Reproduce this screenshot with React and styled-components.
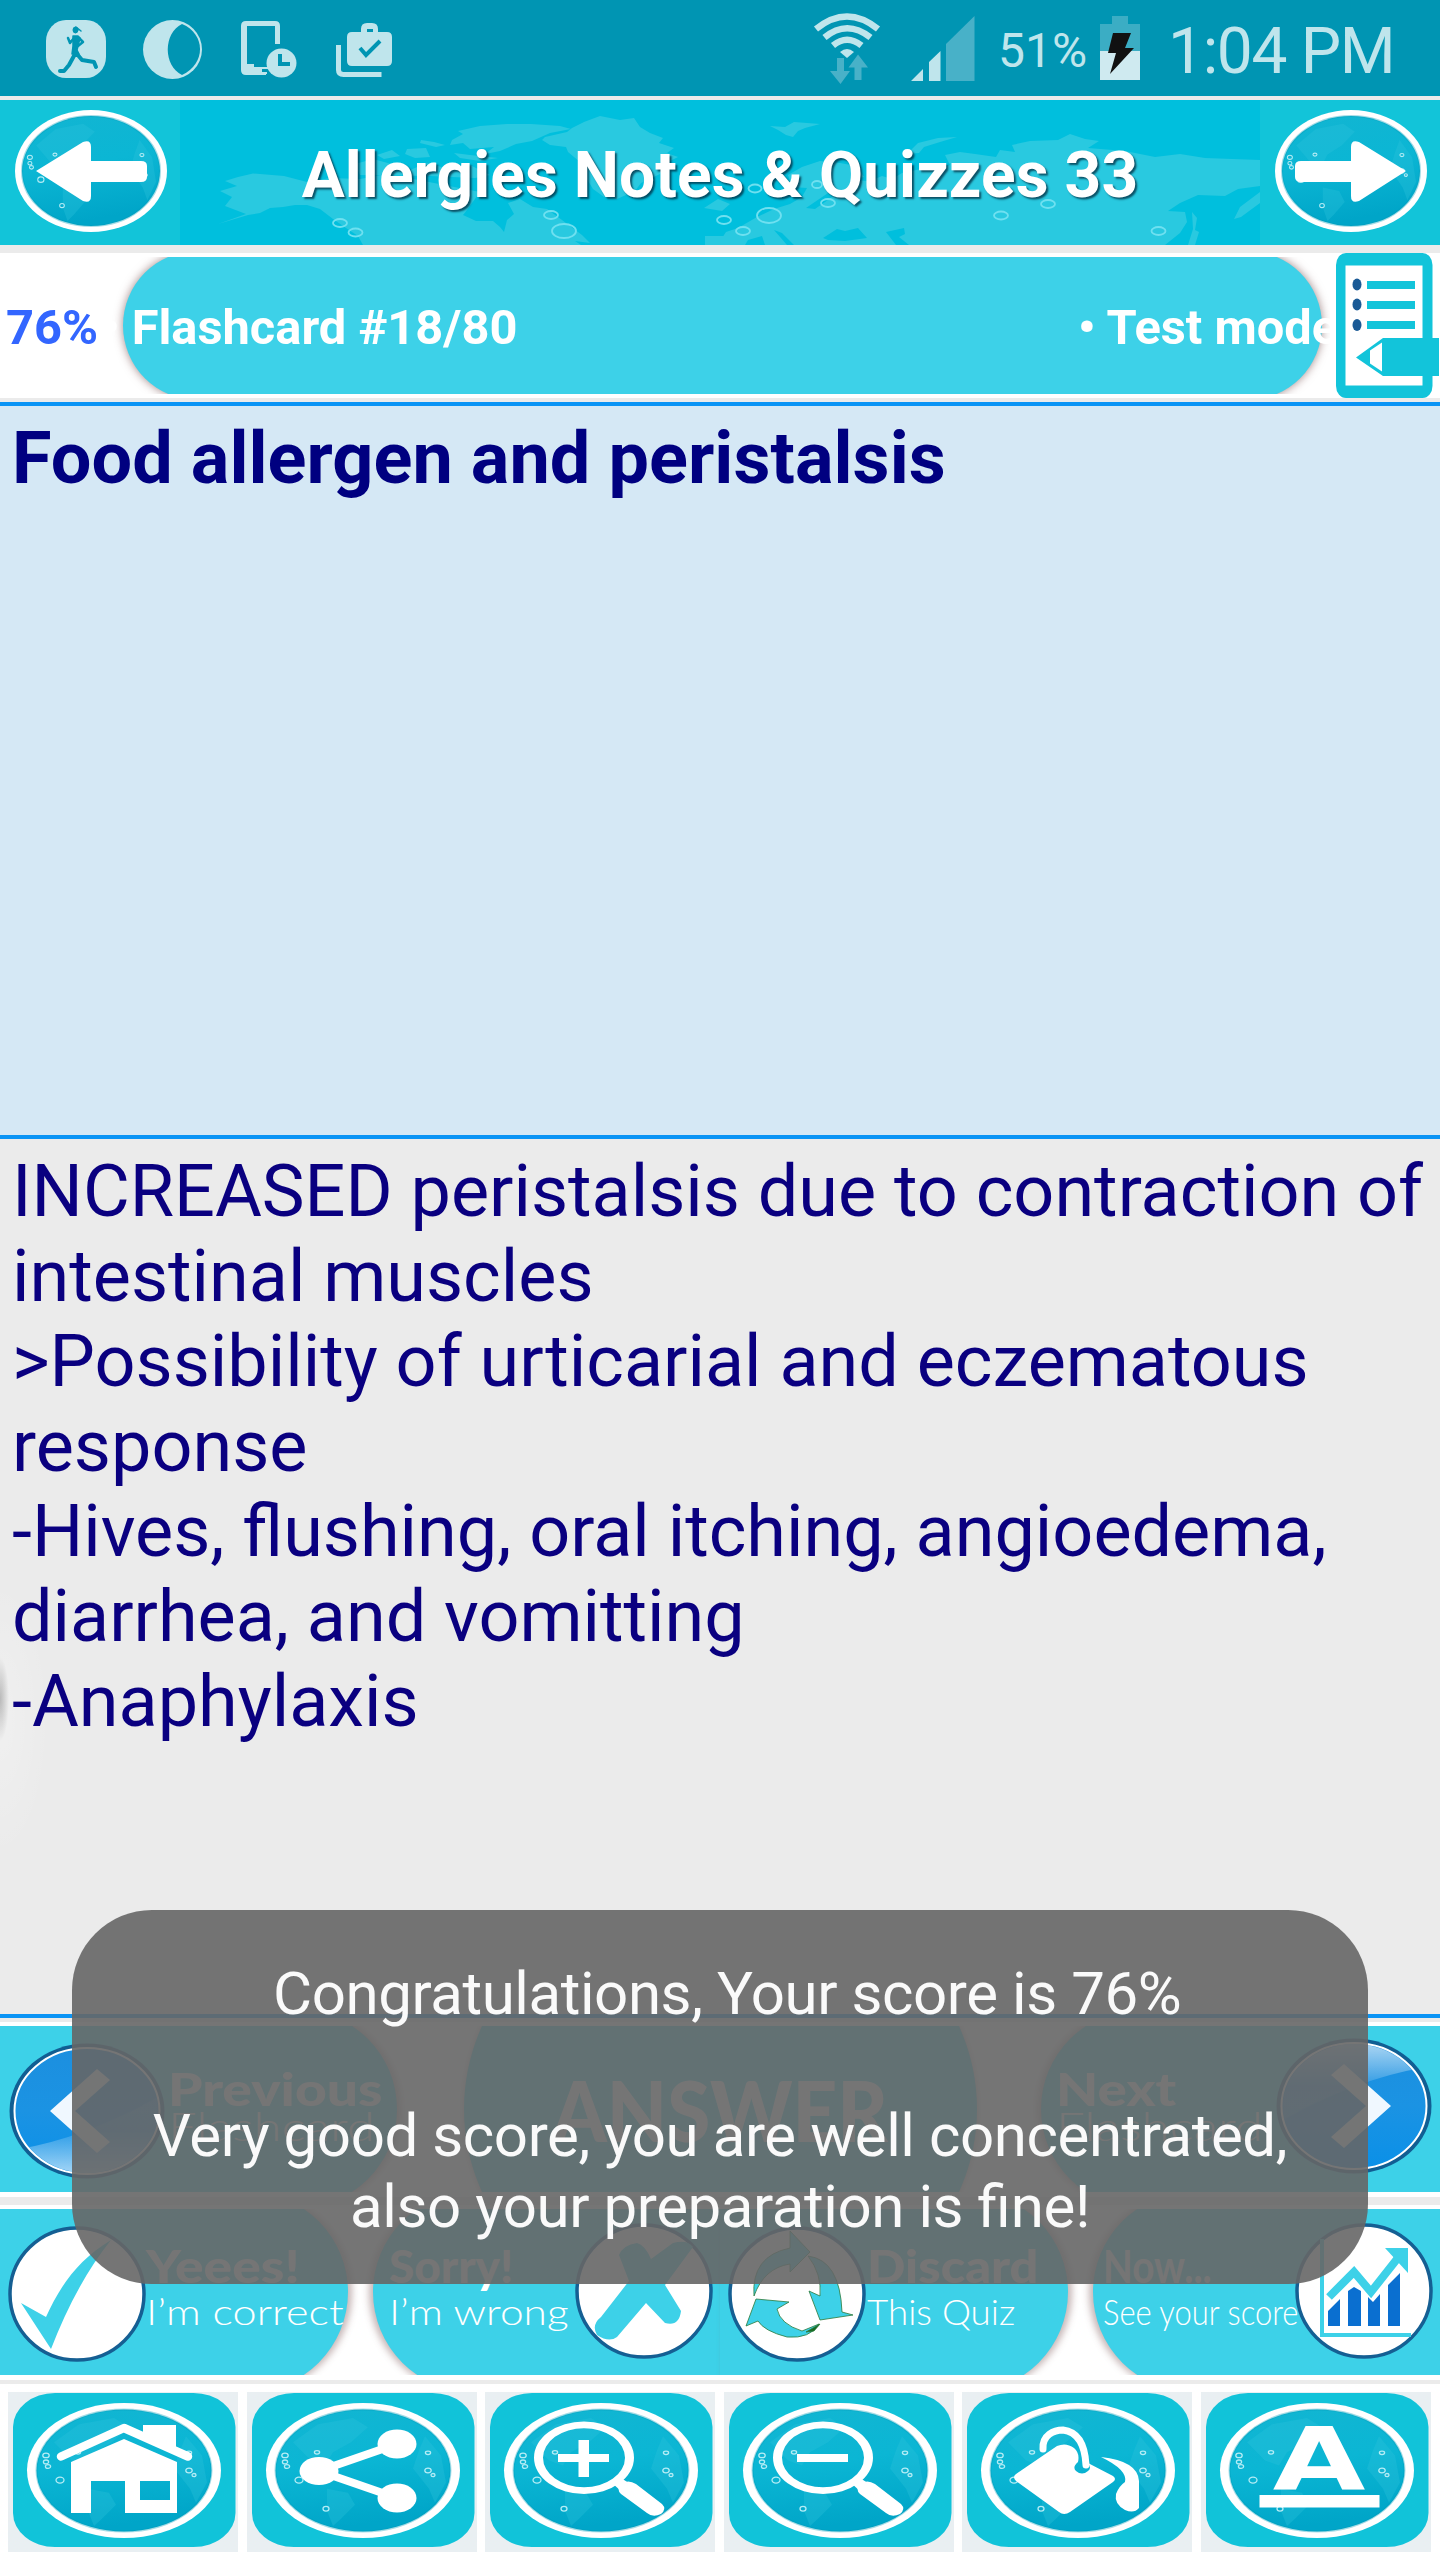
import React from "react";
import styled, { createGlobalStyle, css } from "styled-components";

const GlobalStyle = createGlobalStyle`
  * {
    box-sizing: border-box;
  }
  body {
    margin: 0;
    background-color: #ebebeb;
    font-family: Roboto, sans-serif;
  }
  svg {
    display: block;
    flex: none;
  }
`;

const Screen = styled.div`
  position: relative;
  width: 1440px;
  height: 2560px;
  display: flex;
  flex-direction: column;
  overflow: hidden;
  background-color: #ebebeb;
`;

const StatusBar = styled.div`
  height: 96px;
  flex: none;
  display: flex;
  align-items: flex-start;
  background-color: #0095b3;
  color: #bfe5ec;
`;

const StatusText = styled.span`
  font-size: ${(p) => p.$size}px;
  line-height: 76px;
  padding-top: ${(p) => p.$top}px;
  width: ${(p) => p.$width}px;
  letter-spacing: ${(p) => p.$spacing || 0}px;
  white-space: nowrap;
`;

const Header = styled.header`
  height: 145px;
  margin-top: 4px;
  flex: none;
  display: grid;
  grid-template-columns: 180px 1080px 180px;
  grid-template-rows: 145px;
  background-color: #12c4d9;
`;

const TitleBox = styled.div`
  position: relative;
  background-color: #00bfdd;
  display: flex;
  justify-content: center;
`;

const MapLayer = styled.svg`
  position: absolute;
  inset: 0;
`;

const Title = styled.h1`
  position: relative;
  margin: 0;
  padding-top: 1px;
  font-size: 64px;
  font-weight: 700;
  line-height: 149px;
  letter-spacing: 0.1px;
  color: #fff;
  white-space: nowrap;
  text-shadow: 2px 2px 2px rgba(0, 40, 60, 0.75);
`;

const InfoRow = styled.div`
  position: relative;
  isolation: isolate;
  height: 145px;
  margin-top: 8px;
  flex: none;
  display: flex;
  overflow: hidden;
  background-color: #fff;
  font-size: 48.800px;
  font-weight: 700;
  line-height: 149px;
  color: #fff;
  white-space: nowrap;
`;

const BarClip = styled.div`
  position: absolute;
  z-index: -1;
  left: 100px;
  right: 100px;
  top: 3.5px;
  height: 137.5px;
  overflow: hidden;

  &::before {
    content: "";
    position: absolute;
    left: 23px;
    right: 18px;
    top: -6px;
    bottom: -6px;
    border-radius: 75px;
    background-color: #3dd1e8;
    box-shadow: 0 0 10px rgba(110, 70, 70, 0.65);
  }
`;

const Percent = styled.span`
  width: 102px;
  padding-left: 6px;
  color: #3366ff;
`;

const Counter = styled.span`
  width: 976px;
`;

const Mode = styled.span`
  width: 252px;
`;

const Divider = styled.div`
  height: 4px;
  flex: none;
  margin-top: ${(p) => p.$gap || 0}px;
  background-color: #0a94f5;
`;

const Question = styled.section`
  height: 729px;
  flex: none;
  padding: 10px 12px;
  background-color: #d5e8f5;
  font-size: 72px;
  font-weight: 700;
  line-height: 85px;
  letter-spacing: 0.06px;
  color: #000080;
`;

const Answer = styled.section`
  height: 875px;
  flex: none;
  padding: 10px 0 0 12px;
  background:
    radial-gradient(ellipse 9px 42px at 0 560px, rgba(120, 120, 120, 0.45), transparent),
    radial-gradient(ellipse 50px 140px at 0 580px, rgba(255, 255, 255, 0.25), transparent),
    #ebebeb;
  font-size: 71.950px;
  line-height: 85px;
  color: #0a0080;
  white-space: pre;
`;

const ButtonRow = styled.div`
  height: ${(p) => p.$height}px;
  margin-top: ${(p) => p.$gap}px;
  flex: none;
  padding: 4px 0 5px;
  background-color: #fff;
`;

const RowClip = styled.div`
  height: 166px;
  display: flex;
  overflow: hidden;
`;

const leftArc = css`
  border-top-left-radius: ${(p) => p.$arc}px;
  border-bottom-left-radius: ${(p) => p.$arc}px;
`;

const rightArc = css`
  border-top-right-radius: ${(p) => p.$arc}px;
  border-bottom-right-radius: ${(p) => p.$arc}px;
`;

// keeps the shadow on the curved side only
const shadowShift = (p) => (p.$right ? 4 : 0) - (p.$left ? 4 : 0);

const ArcButton = styled.button`
  position: relative;
  isolation: isolate;
  flex: none;
  width: ${(p) => p.$width}px;
  height: 166px;
  margin: 0 0 0 ${(p) => p.$gap || 0}px;
  padding: 0;
  border: none;
  background: none;
  display: flex;
  align-items: flex-start;
  color: #fff;
  font-family: Lato, sans-serif;
  text-align: left;

  &::before {
    content: "";
    position: absolute;
    z-index: -1;
    left: 0;
    right: 0;
    top: ${(p) => 83 - p.$arc}px;
    height: ${(p) => p.$arc * 2}px;
    background: #3dd1e8;
    box-shadow: ${shadowShift}px 0 7px rgba(120, 80, 80, 0.42);
    ${(p) => (p.$left ? leftArc : "")}
    ${(p) => (p.$right ? rightArc : "")}
  }
`;

const Labels = styled.span`
  display: flex;
  flex-direction: column;
  width: ${(p) => p.$width}px;
  padding-top: ${(p) => p.$top}px;
  padding-left: ${(p) => p.$indent || 0}px;
`;

const Label = styled.span`
  font-size: ${(p) => p.$size}px;
  font-weight: ${(p) => p.$weight};
  line-height: ${(p) => p.$line}px;
  height: ${(p) => p.$line}px;
  transform: scaleX(${(p) => p.$stretch || 1});
  transform-origin: left;
  white-space: nowrap;
`;

const RoundIcon = styled.svg`
  margin: ${(p) => p.$top}px 0 0 ${(p) => p.$left || 0}px;
`;

const ToolBar = styled.nav`
  height: 176px;
  margin-top: 4px;
  flex: none;
  display: flex;
  justify-content: space-between;
  padding: 8px 9px 8px 8px;
  background-color: #fff;
`;

const Tool = styled.button`
  width: 230px;
  height: 160px;
  padding: 0;
  border: none;
  background-color: #e9eff2;
`;

const Toast = styled.div`
  position: absolute;
  left: 72px;
  top: 1910px;
  width: 1296px;
  height: 374px;
  padding-top: 48px;
  border-radius: 80px;
  background-color: rgba(102, 102, 102, 0.9);
  color: #fafafa;
  font-size: 60px;
  line-height: 71px;
  letter-spacing: -0.42px;
  text-align: center;
  white-space: pre;
`;

// letter-spacing switches ligatures off, so "fi" gets its own span
const Ligature = styled.span`
  letter-spacing: 0;
`;

const PALE = "#bfe5ec";

const StatusLeft = () => (
  <svg width="810" height="96" viewBox="0 0 810 96" fill={PALE}>
    <rect x="46" y="20" width="60" height="58" rx="20" ry="21" />
    <g fill="#0095b3" stroke="#0095b3" strokeLinecap="round" strokeLinejoin="round">
      <ellipse cx="75.500" cy="30" rx="2.500" ry="3" />
      <path d="M76 27l5 4" strokeWidth="1.500" fill="none" />
      <path d="M73 36h5l2 2-3 12 2 4h-7l1-8z" strokeWidth="1.500" />
      <path d="M74 38l-4 5-2-5M79 38l4 4-5 4" strokeWidth="2.500" fill="none" />
      <path d="M75 54l-6 11-5 6h-4M77 54l5 6 12 2 2 5" strokeWidth="4" fill="none" />
    </g>
    <circle cx="172.500" cy="49.500" r="29.500" />
    <path d="M182 24C163 33 163 66 182 75C206 64 206 34 182 24z" fill="#0095b3" />
    <path d="M246 21h29q5 0 5 5v18h-5V26h-28v38h7v8h12v3h-20q-5 0-5-5V26q0-5 5-5z" />
    <path d="M258 67h10v2h-6v3h5v2h-13v-7z" fill={PALE} />
    <ellipse cx="281.500" cy="63" rx="15" ry="14.500" />
    <path d="M280 54v10h10" fill="none" stroke="#0095b3" strokeWidth="4" />
    <path d="M352 32h9v-3q0-6 6-6h5q6 0 6 6v3h9q5 0 5 5v24q0 5-5 5h-35q-5 0-5-5V37q0-5 5-5zM367 32h6v-3h-6z" fillRule="evenodd" />
    <path d="M360 48l6 7 14-14" fill="none" stroke="#0095b3" strokeWidth="4" />
    <path d="M338.500 45v25q0 4.500 5 4.500h38" fill="none" stroke={PALE} strokeWidth="5" />
  </svg>
);

const StatusRight = () => (
  <svg width="188" height="96" viewBox="810 0 188 96" fill={PALE}>
    <g fill="none" stroke={PALE} strokeWidth="6.500">
      <path d="M816 29Q847 4 878 29" />
      <path d="M824.500 37.500Q847 19 870.500 37.500" />
      <path d="M833 45.500Q847 34 861.500 45.500" />
    </g>
    <path d="M840 52Q847 46 854 52L847 58z" />
    <g fill="#48b1c8">
      <path d="M837 58h7v13h6L840.500 84 830 71h7z" />
      <path d="M854.500 80V67.500H848.500L858 54.500l10 13h-6.500V80z" />
      <path d="M946 81V44l28.500-28v65z" />
    </g>
    <path d="M911 81l12-12v12zM929 81V62l11.500-11v30z" />
  </svg>
);

const Battery = () => (
  <svg width="68" height="96" viewBox="1100 0 68 96">
    <path d="M1112 16h16v8h12v28h-40V24h12z" fill="#3badc4" />
    <path d="M1100 51h40v29h-40z" fill="#cfeaf0" />
    <path d="M1113 33h18l-6 15h9l-24 26 6-21h-8z" fill="#111" />
  </svg>
);

const bubbles = [
  [160, 123, 7, 4], [175.500, 132.500, 7, 4], [371, 115, 7, 4], [384, 131, 12, 7],
  [575, 88.500, 6.500, 4], [637, 84.500, 5, 3.500], [648, 103, 7, 4], [589, 115.500, 12, 7.500],
  [544, 120, 7, 4], [563, 131, 7, 4], [821, 115.500, 7, 4], [868, 104, 7, 4], [978.500, 131, 7, 4],
];

const WorldMap = () => (
  <MapLayer width="1080" height="145" viewBox="0 0 1080 145">
    <g fill="#29c9e0">
      <path d="M38 124L66 114L45 106L52 97L40 91L57 86L45 81L58 77L73 73.500L104 76L127 82L150 78L180 79L207 74L254 83L300 92L287 110L283 115L296 121L313 121L320 127L324 132L327 120L334 114L328 103L340 99L353 107L367 109L382 120L402 135L410 143L395 141L401 145H183L178 136L166 128L153 119L140 109L127 105L115 105L103 107L90 108L80 113L68 115z" />
      <path d="M365 37L387 32L392 28L404 22L420 16L440 20L454 18L460 27L470 33L483 38L479 43L494 48L487 53L498 57L486 63L480 74L461 83L455 91L437 99L424 97L413 89L405 76L400 62L388 52L386 47L370 45L362 40z" />
      <path d="M272 40L283 34L278 31L300 26L327 24L351 24L380 26L391 29L370 33L352 41L336 44L320 51L305 54L314 47L290 49L283 43L270 45z" />
      <path d="M241 40L254 42L265 45L256 47L240 43zM197 55L212 50L220 56L204 59zM227 49L246 48L250 57L235 58L225 54zM274 53L290 55L318 58L300 61L280 58zM175 64L193 59L215 65L230 70L247 63L265 68L290 65L310 75L295 78L250 76L180 75z" />
      <path d="M590 26L605 27L614 22L640 24L625 28L618 31L613 37L606 35L598 30z" />
      <path d="M730 51L738 43L758 38L777 37L760 42L744 47L739 53L725 54z" />
      <path d="M540 141L546 132L558 128L577 117L594 109L610 104L622 97L627 88L612 87L608 75L622 67L640 61L660 63L676 66L684 77L670 80L690 81L702 76L712 79L722 73L741 69L756 71L770 65L765 55L780 52L795 54L816 57L820 50L835 52L832 45L850 41L878 40L890 34L905 39L919 41L908 48L945 51L975 57L1000 54L1025 58L1080 60V86L1058 89L1045 96L1018 95L1000 103L988 111L1005 112L1007 122L1000 133L985 145H540z" />
      <path d="M1080 92L1060 107L1054 119L1061 117L1080 103zM1012 112l5 6-2 12 4 2-4 13h-7l5-16zM524 108l14-9 12 5-8 7zM525 136h20v9h-20z" />
    </g>
    <g fill="#00bfdd">
      <path d="M643 138L657 129L665 131L678 128L687 138L665 141L648 140zM706 132L724 128L725 134L719 137L729 145H716zM594 130l8 3 12 12h-7zM568 140l14-4 3 9h-20zM626 108l25-17 4 4-20 14z" />
    </g>
    <g fill="none" stroke="#6fe0f0" strokeWidth="1.800">
      {bubbles.map(([x, y, rx, ry]) => (
        <ellipse key={`${x}-${y}`} cx={x} cy={y} rx={rx} ry={ry} />
      ))}
    </g>
  </MapLayer>
);

// ringed globe shared by header arrows and the bottom tools
const Globe = ({ id, cx, cy, rx, ry, sx, sy }) => (
  <>
    <defs>
      <linearGradient id={id} x1="0" y1="0" x2="0.200" y2="1">
        <stop offset="0" stopColor="#12b5d2" />
        <stop offset="0.500" stopColor="#0bb6d4" />
        <stop offset="1" stopColor="#00a5c8" />
      </linearGradient>
    </defs>
    <ellipse cx={cx} cy={cy} rx={rx} ry={ry} fill="#fff" />
    <ellipse cx={cx} cy={cy} rx={rx - sx} ry={ry - sy} fill={`url(#${id})`} stroke="#009bb8" strokeOpacity="0.350" strokeWidth="2" />
    <g transform={`translate(${cx} ${cy}) scale(${rx / 97} ${ry / 67})`}>
      <g fill="#2cc2dc" opacity="0.350">
        <path d="M-70 -28L-45 -46L-10 -52L5 -43L-12 -28L-30 -18L-38 -5L-52 -10z" />
        <path d="M-36 18L-15 22L-8 34L-22 48L-30 55L-36 40z" />
        <path d="M62 -34L78 -15L83 12L72 32L66 18L50 -2L56 -20z" />
      </g>
      <g fill="none" stroke="#b4ecf5" strokeWidth="1.300">
        <ellipse cx="-78" cy="-15" rx="3.200" ry="2.300" />
        <ellipse cx="-78" cy="-8.500" rx="2.600" ry="1.900" />
        <ellipse cx="-76" cy="-4" rx="2.600" ry="1.900" />
        <ellipse cx="-64" cy="9.500" rx="4" ry="3" />
        <ellipse cx="-46" cy="-18" rx="2.600" ry="1.700" />
        <ellipse cx="-37" cy="38" rx="3" ry="2.300" />
        <ellipse cx="65" cy="0" rx="3.200" ry="2.300" />
        <ellipse cx="70" cy="4.500" rx="2" ry="1.500" />
        <ellipse cx="65" cy="-17.500" rx="2.600" ry="1.700" />
      </g>
    </g>
  </>
);

const HeaderArrow = ({ next }) => (
  <svg width="180" height="145" viewBox="0 0 180 145">
    <Globe id={next ? "gNext" : "gPrev"} cx={91} cy={71} rx={76} ry={61} sx={7} sy={6} />
    <path
      transform={next ? "translate(182 0) scale(-1 1)" : undefined}
      d="M36 71L83 42Q91 39 91 47V61H141Q147 61 147 66V77Q147 82 141 82H91V96Q91 104 83 101z"
      fill="#fff"
    />
  </svg>
);

const TestIcon = () => (
  <svg width="110" height="145" viewBox="1330 253 110 145">
    <rect x="1330" y="253" width="110" height="145" fill="#fff" />
    <rect x="1336" y="253" width="96.500" height="145" rx="10" ry="12" fill="#12c4da" />
    <rect x="1345.500" y="265.500" width="77" height="120" fill="#fff" />
    <g fill="#1a5a96">
      <ellipse cx="1357" cy="284.500" rx="4.500" ry="6" />
      <ellipse cx="1357" cy="304.500" rx="4.500" ry="6" />
      <ellipse cx="1357" cy="325" rx="4.500" ry="6" />
    </g>
    <path d="M1367 281h48v8h-48zM1367 301h48v8h-48zM1367 321h48v8h-48zM1356 357.500L1383 338H1439V376H1383z" fill="#12c4da" />
    <path d="M1370 350.500L1382 342.500V371.500L1370 363.500z" fill="#fff" />
  </svg>
);

const BlueCircle = ({ id, next, top, left }) => (
  <RoundIcon width="156" height="136" viewBox="0 0 156 136" $top={top} $left={left}>
    <defs>
      <linearGradient id={id} x1="0" y1="0" x2="0" y2="1">
        <stop offset="0" stopColor="#1c8fdf" />
        <stop offset="0.500" stopColor="#1b93e3" />
        <stop offset="1" stopColor="#0a90e8" />
      </linearGradient>
      <linearGradient id={`${id}Gloss`} x1="0" y1="0" x2="0" y2="1">
        <stop offset="0.450" stopColor="#fff" stopOpacity="0.100" />
        <stop offset="1" stopColor="#fff" stopOpacity="0.700" />
      </linearGradient>
      <clipPath id={`${id}Clip`}>
        <ellipse cx="78" cy="68" rx="71" ry="62" />
      </clipPath>
    </defs>
    <ellipse cx="78" cy="68" rx="77.500" ry="67.500" fill="#115e93" />
    <ellipse cx="78" cy="68" rx="72.500" ry="63" fill={`url(#${id})`} stroke="#fff" strokeWidth="2" />
    <g transform={next ? "rotate(180 78 68)" : undefined}>
      <path d="M0 108Q78 96 156 50V136H0z" fill={`url(#${id}Gloss)`} clipPath={`url(#${id}Clip)`} />
      <path d="M41 68L88 26L101 37L66 68L101 99L88 110z" fill="#f0f8ff" />
    </g>
  </RoundIcon>
);

const WhiteCircle = ({ top, left, children }) => (
  <RoundIcon width="138" height="136" viewBox="0 0 138 136" $top={top} $left={left}>
    <ellipse cx="69" cy="68" rx="67" ry="66" fill="#fff" stroke="#155f93" strokeWidth="3.500" />
    {children}
  </RoundIcon>
);

const CYAN = "#3dd1e8";

const CheckMark = () => (
  <path d="M13 77L38 91C52 60 70 34 103 14C78 45 58 84 43 123Z" fill={CYAN} />
);

const CrossMark = () => (
  <path d="M44 32Q48 22 62 20Q70 22 76 36L98 20Q112 16 118 24L90 62L106 88Q104 104 90 100L71 80L42 114Q34 120 22 112Q16 102 26 94L54 58Z" fill={CYAN} />
);

const Recycle = () => (
  <g fill={CYAN} stroke="#2c7a3a" strokeWidth="0.800" strokeLinejoin="round">
    <path d="M28 73L61 76L49 83Q52 98 74 105L91 98Q82 113 59 111Q36 105 30 95L18 100Z" />
    <path d="M26 70Q23 30 62 22V5L82 26L62 46V38Q36 42 26 70Z" />
    <path d="M80 30Q112 34 114 86L125 89L92 94L81 65L92 70Q94 48 80 30Z" />
    <path d="M78 106L92 98L86 105Z" fill="#176b22" />
  </g>
);

const ScoreChart = () => (
  <g>
    <path d="M27 16V112H116" fill="none" stroke={CYAN} strokeWidth="4" />
    <path d="M33 88L45 76V103H33zM53 68L59 64L66 68V103H53zM73 74L78 79L85 71V103H73zM93 62L105 50V103H93z" fill="#0a6fd0" />
    <path d="M34 74L59 49L76 69L106 31" fill="none" stroke={CYAN} strokeWidth="8" />
    <path d="M90 25H113V50Z" fill={CYAN} />
  </g>
);

const House = () => (
  <g fill="#fff">
    <path d="M53 64.500L116 36L180 64.500" fill="none" stroke="#fff" strokeWidth="8.500" strokeLinecap="round" strokeLinejoin="round" />
    <path d="M135 33H168V60L135 45zM63 70L116 47L169 70V121H117V89H83V121H63zM132 89V108H162V89z" fillRule="evenodd" />
  </g>
);

const Share = () => (
  <g fill="#fff">
    <path d="M150 52L72 79L150 106" fill="none" stroke="#fff" strokeWidth="8" />
    <ellipse cx="72" cy="79" rx="19.500" ry="14" />
    <ellipse cx="150" cy="52" rx="19.500" ry="14.500" />
    <ellipse cx="150" cy="106" rx="19.500" ry="14.500" />
  </g>
);

const Magnifier = ({ plus }) => (
  <g fill="#fff">
    <path d="M49 65.700a50 36.300 0 1 0 100 0a50 36.300 0 1 0 -100 0zM58 65.700a41 29.500 0 1 0 82 0a41 29.500 0 1 0 -82 0z" fillRule="evenodd" />
    <path d="M126 90L136 86L150 95L138 101z" />
    <path d="M136 92Q143 87 151 92L177 112Q182 117 176 122Q168 126 162 121L136 102Q131 97 136 92z" />
    <path d="M73 62h51v8H73z" />
    {plus && <path d="M93.500 48h10.500v37H93.500z" />}
  </g>
);

const Bucket = () => (
  <g fill="#fff">
    <path d="M54 82L95 54Q104 50 112 56Q118 61 116 70Q110 75 114 79Q120 84 126 79Q130 76 126 71L151 84Q155 87 151 90L108 120Q102 124 97 120L54 89Q50 85 54 82z" />
    <path d="M81 57C80 43 92 38 101 38C117 40 123 54 124 73" fill="none" stroke="#fff" strokeWidth="7" strokeLinecap="round" />
    <path d="M139 65Q176 69 177 89V116Q172 122 163 118Q152 112 154 102Q157 94 163 90Q166 78 139 65z" />
  </g>
);

const LetterText = styled.text`
  font-family: "DejaVu Sans", sans-serif;
  font-weight: 700;
  font-size: 88px;
  fill: #fff;
`;

const FontTool = () => (
  <g>
    <LetterText transform="translate(118 98) scale(1.360 1)" textAnchor="middle">A</LetterText>
    <path d="M58.500 103h120v12.500h-120z" fill="#fff" />
  </g>
);

const tools = [
  { id: "home", icon: <House /> },
  { id: "share", icon: <Share /> },
  { id: "zoomIn", icon: <Magnifier plus /> },
  { id: "zoomOut", icon: <Magnifier /> },
  { id: "fill", icon: <Bucket /> },
  { id: "font", icon: <FontTool /> },
];

const answerText = `INCREASED peristalsis due to contraction of
intestinal muscles
>Possibility of urticarial and eczematous
response
-Hives, flushing, oral itching, angioedema,
diarrhea, and vomitting
-Anaphylaxis`;

const toastText = ` Congratulations, Your score is 76%

Very good score, you are well concentrated,
also your preparation is `;

const App = () => {
  return (
    <Screen>
      <GlobalStyle />
      <StatusBar>
        <StatusLeft />
        <StatusRight />
        <StatusText $size={48} $top={13} $width={102}>51%</StatusText>
        <Battery />
        <StatusText $size={64} $top={14} $width={240} $spacing={-1.3}>1:04 PM</StatusText>
      </StatusBar>

      <Header>
        <HeaderArrow />
        <TitleBox>
          <WorldMap />
          <Title>Allergies Notes &amp; Quizzes 33</Title>
        </TitleBox>
        <HeaderArrow next />
      </Header>

      <InfoRow>
        <BarClip />
        <Percent>76%</Percent>
        <Counter>• Flashcard #18/80</Counter>
        <Mode>• Test mode</Mode>
        <TestIcon />
      </InfoRow>

      <Divider $gap={4} />
      <Question>Food allergen and peristalsis</Question>
      <Divider />
      <Answer>{answerText}</Answer>
      <Divider />

      <ButtonRow $gap={4} $height={175}>
        <RowClip>
          <ArcButton $width={397} $arc={99} $right>
            <BlueCircle id="blueLeft" top={17} left={9} />
            <Labels $top={43} $indent={3} $width={230}>
              <Label $size={46} $weight={900} $line={40} $stretch={1.2}>Previous</Label>
              <Label $size={40} $weight={300} $line={34} $stretch={1.27}>Flashcard</Label>
            </Labels>
          </ArcButton>
          <ArcButton $width={513} $gap={67} $arc={200} $left $right>
            <Labels $top={44} $indent={88} $width={513}>
              <Label $size={84} $weight={900} $line={80} $stretch={0.93}>ANSWER</Label>
            </Labels>
          </ArcButton>
          <ArcButton $width={399} $gap={64} $arc={99} $left>
            <Labels $top={43} $indent={15} $width={235}>
              <Label $size={46} $weight={900} $line={40} $stretch={1.19}>Next</Label>
              <Label $size={40} $weight={300} $line={34} $stretch={1.27}>Flashcard</Label>
            </Labels>
            <BlueCircle id="blueRight" next top={12} />
          </ArcButton>
        </RowClip>
      </ButtonRow>

      <ButtonRow $gap={8} $height={175}>
        <RowClip>
          <ArcButton $width={348} $arc={100} $right>
            <WhiteCircle top={17} left={8}><CheckMark /></WhiteCircle>
            <Labels $top={35} $indent={0} $width={200}>
              <Label $size={46} $weight={900} $line={43} $stretch={1.16}>Yeees!</Label>
              <Label $size={36} $weight={300} $line={48} $stretch={1.2}>I’m correct</Label>
            </Labels>
          </ArcButton>
          <ArcButton $width={347} $gap={25} $arc={100} $left>
            <Labels $top={35} $indent={16} $width={202}>
              <Label $size={46} $weight={900} $line={43}>Sorry!</Label>
              <Label $size={36} $weight={300} $line={48} $stretch={1.18}>I’m wrong</Label>
            </Labels>
            <WhiteCircle top={14}><CrossMark /></WhiteCircle>
          </ArcButton>
          <ArcButton $width={348} $arc={100} $right>
            <WhiteCircle top={17} left={8}><Recycle /></WhiteCircle>
            <Labels $top={35} $indent={1} $width={200}>
              <Label $size={46} $weight={900} $line={43} $stretch={1.1}>Discard</Label>
              <Label $size={36} $weight={300} $line={48} $stretch={1.02}>This Quiz</Label>
            </Labels>
          </ArcButton>
          <ArcButton $width={347} $gap={25} $arc={100} $left>
            <Labels $top={35} $indent={10} $width={202}>
              <Label $size={46} $weight={700} $line={43} $stretch={0.84}>Now...</Label>
              <Label $size={36} $weight={300} $line={48} $stretch={0.86}>See your score</Label>
            </Labels>
            <WhiteCircle top={14}><ScoreChart /></WhiteCircle>
          </ArcButton>
        </RowClip>
      </ButtonRow>

      <ToolBar>
        {tools.map((tool) => (
          <Tool key={tool.id}>
            <svg width="230" height="160" viewBox="0 0 230 160">
              <rect x="5" y="1" width="222.500" height="154" rx="42" ry="34" fill="#11c3d9" />
              <Globe id={`g-${tool.id}`} cx={116} cy={78.5} rx={97} ry={67.5} sx={9.5} sy={6.5} />
              {tool.icon}
            </svg>
          </Tool>
        ))}
      </ToolBar>

      <Toast>
        {toastText}
        <Ligature>fi</Ligature>
        {"ne!"}
      </Toast>
    </Screen>
  );
};

export default App;
